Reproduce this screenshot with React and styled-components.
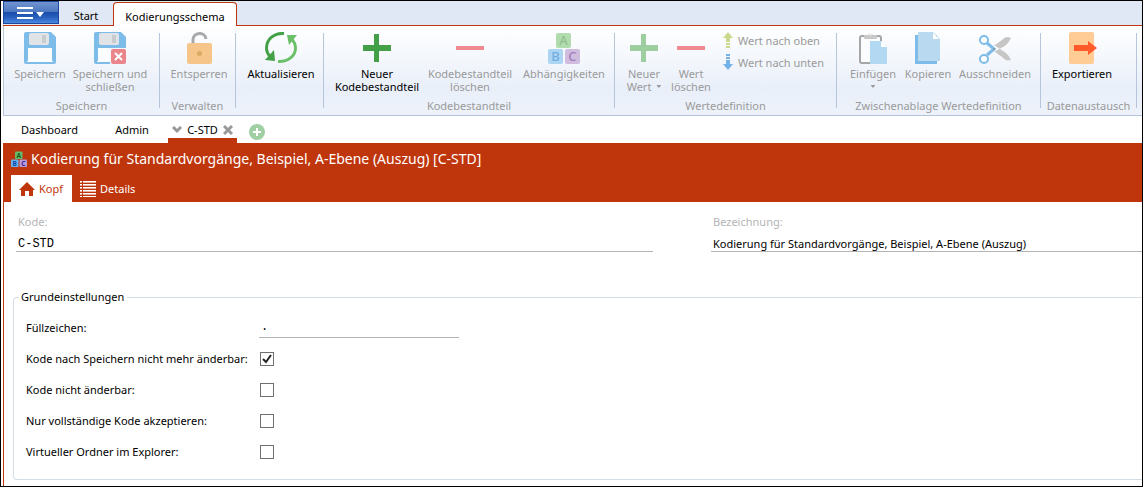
import React, { useState } from "react";
import styled, { createGlobalStyle } from "styled-components";

const c = {
  red: "#bf360c",
  ink: "#000000",
  dim: "#9a9a9a",
  strip: "#dfe8f4",
  line: "#b6c5da",
};

const Global = createGlobalStyle`
  *, *::before, *::after { box-sizing: border-box; }
  body {
    margin: 0;
    background: #fff;
    color: ${c.ink};
    font: 11px/13px "Noto Sans", "Open Sans", sans-serif;
  }
  button, input { font: inherit; color: inherit; margin: 0; }
  button { border: 0; padding: 0; background: none; white-space: nowrap; }
  svg { display: block; flex: none; }
`;

const Frame = styled.div`
  min-height: 100vh;
  display: flex;
  flex-direction: column;
  border: 1px solid #000;
  padding-left: 2px;
  overflow: hidden;
`;

const TabStrip = styled.nav`
  display: flex;
  height: 25px;
  border-bottom: 1px solid ${c.red};
  background: ${c.strip};
`;

const AppMenu = styled.button`
  width: 56px;
  height: 23px;
  display: flex;
  align-items: center;
  justify-content: center;
  border: 1px solid #1c479c;
  background: linear-gradient(#7294cf 0%, #4d79c2 46%, #1a4dab 50%, #2a62c0 75%, #4a8ae0 100%);
`;

const RibbonTab = styled.button`
  min-width: ${(p) => p.$width}px;
  height: ${(p) => (p.$active ? 24 : 23)}px;
  margin-top: 1px;
  padding-top: 3px;
  ${(p) =>
    p.$active &&
    `background: #fff;
     border: 1px solid ${c.red};
     border-bottom: 0;
     border-radius: 4px 4px 0 0;`}
`;

const Ribbon = styled.section`
  display: flex;
  align-items: flex-start;
  height: 90px;
  padding-top: 7px;
  border-left: 1px solid ${c.line};
  border-bottom: 1px solid ${c.line};
  background: linear-gradient(#ffffff 0%, #f1f5fb 45%, #e9eff9 70%, #edf2fa 100%);
`;

const Group = styled.div`
  flex: none;
  width: ${(p) => p.$width}px;
  height: 75px;
  display: flex;
  flex-direction: column;
  justify-content: space-between;
  border-right: 1px solid ${c.line};
`;

const Tools = styled.div`
  display: flex;
  gap: 2px;
  padding-left: 8px;
`;

const Caption = styled.div`
  line-height: 16px;
  min-height: 11px;
  margin-bottom: -6px;
  text-align: center;
  white-space: nowrap;
  color: ${c.dim};
`;

const Tool = styled.button`
  width: ${(p) => p.$width}px;
  display: flex;
  flex-direction: column;
  align-items: center;
  color: ${c.ink};
  &:disabled { color: ${c.dim}; }
  svg { margin-top: -1px; }
`;

const ToolLabel = styled.span`
  display: flex;
  flex-direction: column;
  align-items: center;
  padding-top: 3px;
`;

const Line = styled.span`
  display: flex;
  align-items: center;
  gap: 5px;
  height: 13px;
`;

const Caret = styled.i`
  width: 5px;
  height: 3px;
  background: currentColor;
  clip-path: polygon(0 0, 100% 0, 50% 100%);
`;

const Stack = styled.div`
  display: flex;
  flex-direction: column;
  padding-left: 6px;
`;

const SmallTool = styled.button`
  display: flex;
  align-items: center;
  gap: 5px;
  height: 22px;
  padding-bottom: 7px;
  color: ${c.dim};
`;

const DocTabs = styled.nav`
  display: flex;
  height: 27px;
`;

const DocTab = styled.button`
  min-width: ${(p) => p.$width}px;
  display: flex;
  align-items: center;
  justify-content: center;
  gap: 5px;
  padding-bottom: ${(p) => (p.$active ? 0 : 1)}px;
  ${(p) => p.$active && `border-bottom: 5px solid ${c.red}; padding-top: 5px;`}
`;

const AddTab = styled.button`
  display: flex;
  padding: 8px 12px 0;
`;

const Banner = styled.header`
  background: ${c.red};
  color: #fff;
`;

const Title = styled.h1`
  display: flex;
  align-items: center;
  gap: 4px;
  height: 32px;
  margin: 0;
  padding-left: 8px;
  font-size: 14px;
  font-weight: 400;
  line-height: 20px;
  white-space: nowrap;
`;

const PageTabs = styled.div`
  display: flex;
  padding-left: 8px;
`;

const PageTab = styled.button`
  width: ${(p) => p.$width}px;
  height: 27px;
  display: flex;
  align-items: center;
  gap: 4px;
  padding-left: 8px;
  background: ${(p) => (p.$active ? "#fff" : "transparent")};
  color: ${(p) => (p.$active ? c.red : "#fff")};
`;

const Body = styled.main`
  flex: 1;
  border-left: 1px solid ${c.red};
  padding: 12px 0 6px 9px;
`;

const Heads = styled.div`
  display: grid;
  grid-template-columns: 637fr 431fr;
  gap: 58px;
  padding-left: 3px;
`;

const Field = styled.label`
  display: flex;
  flex-direction: column;
  color: #b4b4b4;
  line-height: 16px;
`;

const FieldName = styled.span`
  padding-left: 2px;
`;

const TextBox = styled.input`
  width: 100%;
  height: 20px;
  border: 0;
  border-bottom: 1px solid #b4b4b4;
  border-radius: 0;
  outline: 0;
  padding: 0 2px;
  background: transparent;
  color: ${c.ink};
  ${(p) => p.$mono && `font-family: "Liberation Mono", monospace; font-size: 12px;`}
`;

const HeadBox = styled(TextBox)`
  height: 16px;
  margin-top: 6px;
`;

const Settings = styled.fieldset`
  min-width: 0;
  margin: 37px 0 0;
  padding: 7px 0 12px 12px;
  border: 1px solid #d5dde4;
  border-right: 0;
  border-radius: 4px 0 0 4px;
`;

const Legend = styled.legend`
  margin-left: -7px;
  padding: 0 3px 0 2px;
  line-height: 16px;
`;

const Row = styled.div`
  display: grid;
  grid-template-columns: 233px 200px;
  align-items: center;
  height: 31px;
  label { white-space: nowrap; }
`;

const Check = styled.input`
  appearance: none;
  width: 14px;
  height: 14px;
  margin-left: 1px;
  border: 1px solid #707070;
  background: #fff;
  &:checked {
    background: #fff url("data:image/svg+xml,%3Csvg xmlns='http://www.w3.org/2000/svg' viewBox='0 0 12 12'%3E%3Cpath d='M2 6l3 3 5-7' fill='none' stroke='%23222' stroke-width='2'/%3E%3C/svg%3E") center / 12px 12px;
  }
`;

const Disk = ({ close }) => (
  <svg width="32" height="32" viewBox="0 0 32 32">
    <path d="M2 0h25l5 5v25a2 2 0 0 1-2 2H2a2 2 0 0 1-2-2V2a2 2 0 0 1 2-2z" fill="#7dbce9" />
    <rect x="5" y="1" width="20" height="12" rx="2" fill="#e1e4e6" />
    <rect x="18" y="3" width="4" height="8" fill="#c8cccf" />
    <rect x="4" y="16" width="24" height="14" fill="#fafcfe" />
    <rect x="3" y="29" width="26" height="1" fill="#fafcfe" />
    {close && (
      <>
        <path d="M16 16h16v16H16z" fill="#f3f6fb" />
        <rect x="17" y="17" width="15" height="15" rx="2" fill="#ea858c" />
        <path d="M21 21l7 7M28 21l-7 7" stroke="#fff" strokeWidth="2" />
      </>
    )}
  </svg>
);

const Lock = () => (
  <svg width="32" height="32" viewBox="0 0 32 32">
    <path d="M10 12V8c0-8 12-9 13-1" fill="none" stroke="#a9a9a9" strokeWidth="3" />
    <rect x="4" y="11" width="25" height="21" rx="2" fill="#f6c58a" />
    <circle cx="16.500" cy="21.500" r="2.500" fill="#dba964" />
  </svg>
);

const Refresh = () => (
  <svg width="34" height="32" viewBox="0 0 34 32">
    <path d="M20 1.500C10 1 2.500 7 2.500 16c0 4 2 7 4 9" fill="none" stroke="#43a047" strokeWidth="3" />
    <path d="M1 28l9-10 1 11z" fill="#43a047" />
    <path d="M14 29.500C24 30 31.500 24 31.500 16c0-4-2-7-4-9" fill="none" stroke="#6abf69" strokeWidth="3" />
    <path d="M23 3l10 0-8 10z" fill="#6abf69" />
  </svg>
);

const Plus = ({ fill }) => (
  <svg width="32" height="32" viewBox="0 0 32 32">
    <path d="M13 2h5v11h12v6H18v11h-5V19H2v-6h11z" fill={fill} />
  </svg>
);

const Minus = () => (
  <svg width="32" height="32" viewBox="0 0 32 32">
    <path d="M2 14h28v4H2z" fill="#ef8a90" />
  </svg>
);

const Blocks = ({ size, vivid }) => {
  const cells = [
    ["A", 8, 1, vivid ? "#66bb6a" : "#b1dcae", vivid ? "#1b5e20" : "#93c091"],
    ["B", 0, 17, vivid ? "#64b5f6" : "#acd5f3", vivid ? "#0d47a1" : "#71aee0"],
    ["C", 17, 17, vivid ? "#b39ddb" : "#cfbcdf", vivid ? "#4a148c" : "#a07fba"],
  ];
  return (
    <svg width={size} height={size} viewBox="0 0 32 32" fontFamily="Noto Sans, sans-serif">
      {cells.map(([ch, x, y, bg, fg]) => (
        <g key={ch}>
          <rect x={x} y={y} width="15" height="15" rx="2" fill={bg} />
          <text x={x + 7.5} y={y + 12} fontSize="13" fontWeight={vivid ? 700 : 500} textAnchor="middle" fill={fg}>{ch}</text>
        </g>
      ))}
    </svg>
  );
};

const UpArrow = () => (
  <svg width="10" height="17" viewBox="0 0 10 17">
    <path d="M5 0l5 6H7v4H3V6H0zM3 11h4v2H3zM3 14h4v2H3z" fill="#c9d98c" />
  </svg>
);

const DownArrow = () => (
  <svg width="10" height="17" viewBox="0 0 10 17">
    <path d="M5 16l5-6H7V6H3v4H0zM3 3h4v2H3zM3 0h4v2H3z" fill="#73b3e7" />
  </svg>
);

const Paste = () => (
  <svg width="32" height="32" viewBox="0 0 32 32">
    <rect x="3" y="4" width="21" height="27" rx="2" fill="#fafcfe" stroke="#a6a6a6" strokeWidth="2" />
    <path d="M7 3h4a3 3 0 0 1 5 0h4v3a1 1 0 0 1-1 1H8a1 1 0 0 1-1-1z" fill="#c9c9c9" />
    <circle cx="13.500" cy="2.500" r="1" fill="#fff" />
    <path d="M13 9h11l6 6v17H13z" fill="#b3d9f2" />
    <path d="M24 9l6 6h-6z" fill="#fff" />
  </svg>
);

const Copy = () => (
  <svg width="32" height="32" viewBox="0 0 32 32">
    <path d="M3 3h22v29H3z" fill="#7dbce9" />
    <path d="M6 0h15l7 7v22H6z" fill="#b9d9f1" />
    <path d="M21 1l6 6h-6z" fill="#fff" />
  </svg>
);

const Scissors = () => (
  <svg width="34" height="32" viewBox="0 0 34 32">
    <path d="M33 6c-4-2-6-1-9 2L13 16l3 4 9-5c4-2 6-5 8-9zM33 28c-4 1-6 0-9-3L13 17l3-4 9 6c4 2 6 5 8 9z" fill="#c6c6c6" />
    <path d="M9 11l7 6-7 6" fill="none" stroke="#7dbce9" strokeWidth="3" />
    <circle cx="6" cy="8" r="4" fill="#fff" stroke="#7dbce9" strokeWidth="2" />
    <circle cx="6" cy="27" r="4" fill="#fff" stroke="#7dbce9" strokeWidth="2" />
    <circle cx="16" cy="17" r="1" fill="#909090" />
  </svg>
);

const Export = () => (
  <svg width="32" height="32" viewBox="0 0 32 32">
    <rect x="3" y="0" width="25" height="32" rx="2" fill="#ffcc96" />
    <path d="M8 13h14V9l9 7-9 7v-4H8z" fill="#ff5b2b" />
  </svg>
);

const Home = () => (
  <svg width="16" height="16" viewBox="0 0 16 16">
    <path d="M8 1l8 8h-2v6h-4v-5H6v5H2V9H0z" fill={c.red} />
  </svg>
);

const List = () => (
  <svg width="16" height="16" viewBox="0 0 16 16" fill="#fff">
    {[0, 3, 6, 9, 12, 15].map((y) => (
      <path key={y} d={`M0 ${y}h2v1H0zM3 ${y}h13v1H3z`} />
    ))}
    {[1, 4, 7, 10, 13].map((y) => (
      <path key={y} d={`M0 ${y}h2v1H0zM3 ${y}h13v1H3z`} opacity="0.6" />
    ))}
  </svg>
);

const tool = (icon, lines, width, opts = {}) => ({ icon, lines, width, ...opts });

const groups = [
  {
    caption: "Speichern", width: 156,
    tools: [
      tool(<Disk />, ["Speichern"], 56),
      tool(<Disk close />, ["Speichern und", "schließen"], 80),
    ],
  },
  { caption: "Verwalten", width: 76, tools: [tool(<Lock />, ["Entsperren"], 62)] },
  { caption: "", width: 88, tools: [tool(<Refresh />, ["Aktualisieren"], 74, { on: true })] },
  {
    caption: "Kodebestandteil", width: 291,
    tools: [
      tool(<Plus fill="#43a047" />, ["Neuer", "Kodebestandteil"], 90, { on: true }),
      tool(<Minus />, ["Kodebestandteil", "löschen"], 92),
      tool(<Blocks size={32} />, ["Abhängigkeiten"], 92),
    ],
  },
  {
    caption: "Wertedefinition", width: 222,
    tools: [
      tool(<Plus fill="#9ccea0" />, ["Neuer", "Wert"], 42, { menu: true }),
      tool(<Minus />, ["Wert", "löschen"], 48),
    ],
    small: [
      [<UpArrow />, "Wert nach oben"],
      [<DownArrow />, "Wert nach unten"],
    ],
  },
  {
    caption: "Zwischenablage Wertedefinition", width: 204,
    tools: [
      tool(<Paste />, ["Einfügen", ""], 56, { menu: true }),
      tool(<Copy />, ["Kopieren"], 50),
      tool(<Scissors />, ["Ausschneiden"], 80),
    ],
  },
  { caption: "Datenaustausch", width: 96, tools: [tool(<Export />, ["Exportieren"], 66, { on: true })] },
];

const checks = [
  ["fixed", "Kode nach Speichern nicht mehr änderbar:", true],
  ["locked", "Kode nicht änderbar:", false],
  ["complete", "Nur vollständige Kode akzeptieren:", false],
  ["virtual", "Virtueller Ordner im Explorer:", false],
];

function RibbonGroup({ caption, width, tools, small }) {
  return (
    <Group $width={width}>
      <Tools>
        {tools.map((t) => (
          <Tool key={t.lines.join(" ")} $width={t.width} disabled={!t.on}>
            {t.icon}
            <ToolLabel>
              {t.lines.map((text, i) => (
                <Line key={i}>
                  {text}
                  {t.menu && i === t.lines.length - 1 && <Caret />}
                </Line>
              ))}
            </ToolLabel>
          </Tool>
        ))}
        {small && (
          <Stack>
            {small.map(([icon, text]) => (
              <SmallTool key={text} disabled>{icon}{text}</SmallTool>
            ))}
          </Stack>
        )}
      </Tools>
      <Caption>{caption}</Caption>
    </Group>
  );
}

export default function App() {
  const [values, setValues] = useState(Object.fromEntries(checks.map(([id, , on]) => [id, on])));
  return (
    <Frame>
      <Global />
      <TabStrip>
        <AppMenu aria-label="Menü">
          <svg width="28" height="14" viewBox="0 0 28 14" fill="#fff">
            <path d="M0 1h16v2H0zM0 6h16v2H0zM0 11h16v2H0zM19 6h8l-4 5z" />
          </svg>
        </AppMenu>
        <RibbonTab $width={54}>Start</RibbonTab>
        <RibbonTab $width={124} $active>Kodierungsschema</RibbonTab>
      </TabStrip>
      <Ribbon>
        {groups.map((g) => <RibbonGroup key={g.width} {...g} />)}
      </Ribbon>
      <DocTabs>
        <DocTab $width={93}>Dashboard</DocTab>
        <DocTab $width={72}>Admin</DocTab>
        <DocTab $width={69} $active>
          <svg width="10" height="8" viewBox="0 0 10 8"><path d="M1 1l4 4 4-4" fill="none" stroke="#999" strokeWidth="3" /></svg>
          C-STD
          <svg width="10" height="10" viewBox="0 0 10 10"><path d="M1 1l8 8M9 1l-8 8" stroke="#999" strokeWidth="3" /></svg>
        </DocTab>
        <AddTab aria-label="Neuer Tab">
          <svg width="16" height="16" viewBox="0 0 16 16">
            <circle cx="8" cy="8" r="8" fill="#a1cfa4" />
            <path d="M8 4v8M4 8h8" stroke="#fff" strokeWidth="2" />
          </svg>
        </AddTab>
      </DocTabs>
      <Banner>
        <Title><Blocks size={16} vivid />Kodierung für Standardvorgänge, Beispiel, A-Ebene (Auszug) [C-STD]</Title>
        <PageTabs>
          <PageTab $width={61} $active><Home />Kopf</PageTab>
          <PageTab $width={80}><List />Details</PageTab>
        </PageTabs>
      </Banner>
      <Body>
        <Heads>
          <Field><FieldName>Kode:</FieldName><HeadBox $mono defaultValue="C-STD" /></Field>
          <Field><FieldName>Bezeichnung:</FieldName><HeadBox defaultValue="Kodierung für Standardvorgänge, Beispiel, A-Ebene (Auszug)" /></Field>
        </Heads>
        <Settings>
          <Legend>Grundeinstellungen</Legend>
          <Row>
            <label htmlFor="fill">Füllzeichen:</label>
            <TextBox id="fill" $mono defaultValue="." />
          </Row>
          {checks.map(([id, text]) => (
            <Row key={id}>
              <label htmlFor={id}>{text}</label>
              <Check
                type="checkbox"
                id={id}
                checked={values[id]}
                onChange={(e) => setValues({ ...values, [id]: e.target.checked })}
              />
            </Row>
          ))}
        </Settings>
      </Body>
    </Frame>
  );
}
